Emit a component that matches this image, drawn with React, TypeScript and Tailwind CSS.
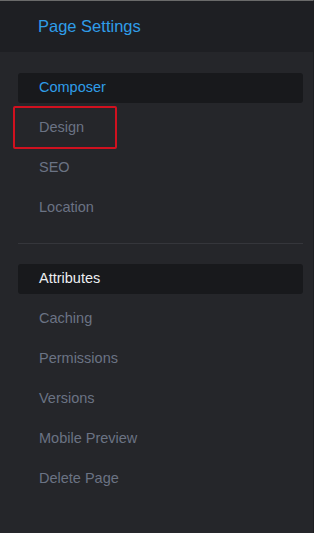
const groups = [
  ["Composer", "Design", "SEO", "Location"],
  ["Attributes", "Caching", "Permissions", "Versions", "Mobile Preview", "Delete Page"],
];

function NavItem({ label, active, primary, outlined }: any) {
  return (
    <div className="h-10 flex items-center pl-[18px] pr-[10px]">
      <div
        className={
          "h-[30px] w-full flex items-center pl-[21px] rounded-[3px] " +
          (active ? "bg-[#18191c] " : "") +
          (primary ? "text-[#2f9de8]" : active ? "text-[#eceef1]" : "text-[#6b7384]")
        }
      >
        {label}
      </div>
      {outlined && (
        <div className="absolute left-[13px] top-[105px] w-[104px] h-[43px] border-2 border-[#d0111f] rounded-[2px]" />
      )}
    </div>
  );
}

export default function App() {
  return (
    <div
      className="relative w-[314px] h-[533px] bg-[#25262a] border-t border-[#6a6a6a] border-r border-r-[#1d1e21] text-[14.5px] overflow-hidden"
      style={{ fontFamily: '"Liberation Sans", Arial, sans-serif' }}
    >
      <div className="h-[51px] bg-[#1e1f23] flex items-center pl-[38px] text-[16.5px] text-[#2f9de8]">
        Page Settings
      </div>

      <div className="pt-4">
        <div className="pb-[15px]">
          {groups[0].map((label, i) => (
            <NavItem key={label} label={label} active={i === 0} primary={i === 0} outlined={label === "Design"} />
          ))}
        </div>
        <div className="ml-[18px] mr-[10px] border-t border-[#35363b]" />
        <div className="pt-[15px]">
          {groups[1].map((label, i) => (
            <NavItem key={label} label={label} active={i === 0} />
          ))}
        </div>
      </div>
    </div>
  );
}
